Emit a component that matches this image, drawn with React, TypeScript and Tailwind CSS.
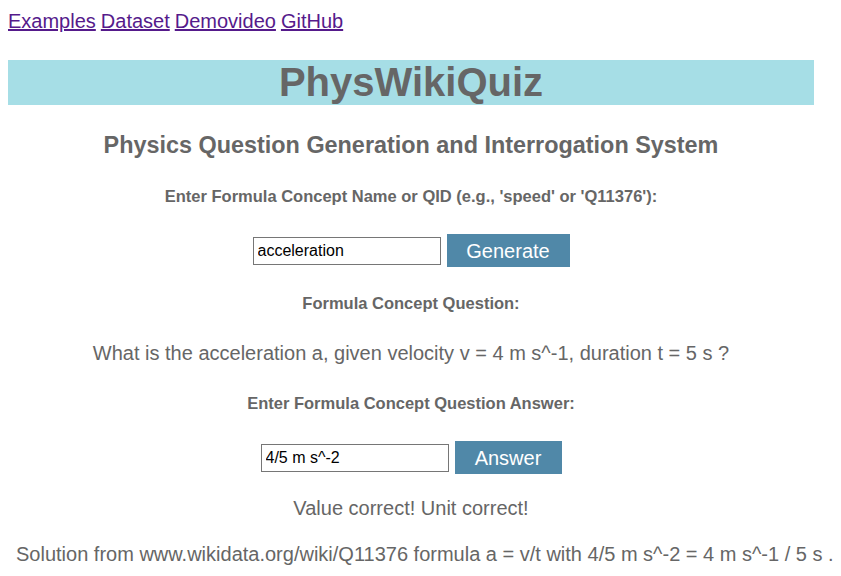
export default function App() {
    const font = { fontFamily: '"Liberation Sans", Arial, sans-serif' };

    return (
        <div className="min-h-[576px] bg-white text-[#666666] px-[8px]" style={font}>
            <nav className="pt-[10px] text-[20px] leading-[23px] text-[#551a8b] flex gap-[5px]">
                <a href="#" className="underline">Examples</a>
                <a href="#" className="underline">Dataset</a>
                <a href="#" className="underline">Demovideo</a>
                <a href="#" className="underline">GitHub</a>
            </nav>

            <div className="w-[806px] mt-[27px] flex flex-col items-center text-center">
                <h1 className="w-full bg-[#a6dee6] text-[40px] leading-[45px] font-bold">PhysWikiQuiz</h1>

                <h2 className="mt-[26px] text-[23.4px] leading-[28px] font-bold">
                    Physics Question Generation and Interrogation System
                </h2>

                <p className="mt-[28px] text-[16.5px] leading-[18px] font-bold">
                    Enter Formula Concept Name or QID (e.g., 'speed' or 'Q11376'):
                </p>

                <div className="mt-[29px] flex items-center gap-[6px]">
                    <input
                        defaultValue="acceleration"
                        className="w-[188px] h-[28px] border border-[#767676] px-[4px] text-[16px] text-black"
                    />
                    <button className="w-[123px] h-[33px] bg-[#5088a8] text-white text-[20px]">Generate</button>
                </div>

                <p className="mt-[27px] text-[16.5px] leading-[18px] font-bold">Formula Concept Question:</p>

                <p className="mt-[30px] text-[20px] leading-[23px]">
                    What is the acceleration a, given velocity v = 4 m s^-1, duration t = 5 s ?
                </p>

                <p className="mt-[29px] text-[16.5px] leading-[18px] font-bold">Enter Formula Concept Question Answer:</p>

                <div className="mt-[29px] flex items-center gap-[6px]">
                    <input
                        defaultValue="4/5 m s^-2"
                        className="w-[188px] h-[28px] border border-[#767676] px-[4px] text-[16px] text-black"
                    />
                    <button className="w-[107px] h-[33px] bg-[#5088a8] text-white text-[20px]">Answer</button>
                </div>

                <p className="mt-[23px] text-[20px] leading-[23px]">Value correct! Unit correct!</p>
            </div>

            <p className="mt-[23px] ml-[8px] text-[20px] leading-[23px] whitespace-nowrap">
                Solution from www.wikidata.org/wiki/Q11376 formula a = v/t with 4/5 m s^-2 = 4 m s^-1 / 5 s .
            </p>
        </div>
    );
}
